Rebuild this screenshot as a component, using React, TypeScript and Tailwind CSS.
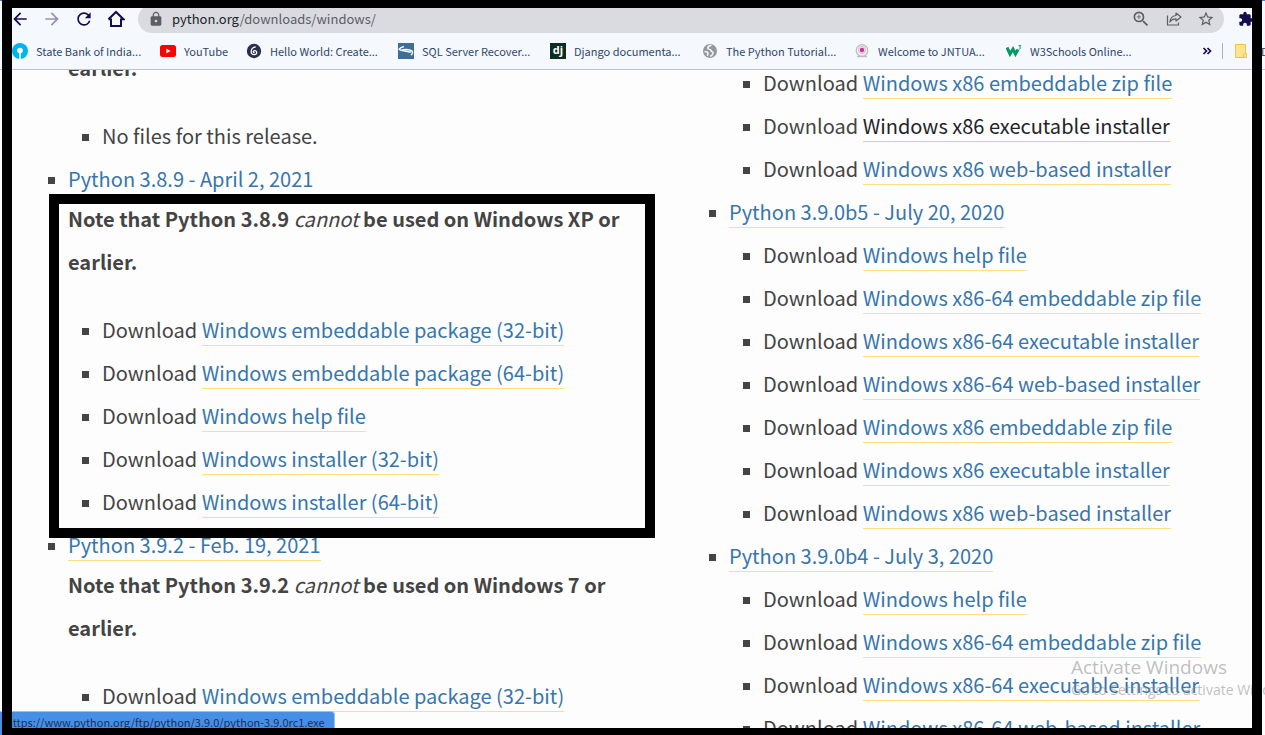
import React from "react";
import { MdArrowBack, MdArrowForward, MdRefresh, MdLock, MdZoomIn, MdStarBorder, MdExtension } from "react-icons/md";

const PAGE_FONT = "font-['Noto_Sans_CJK_SC','Noto_Sans',sans-serif]";

function HomeIcon() {
  return (
    <svg viewBox="0 0 18 18" className="size-[18px]" fill="none" stroke="currentColor" strokeWidth="2">
      <path d="M4 8.5V16h10V8.5M1.5 9.2 9 2l7.500 7.200H14M1.500 9.200H4" />
    </svg>
  );
}

function ShareIcon() {
  return (
    <svg viewBox="0 0 16 16" className="size-4" fill="none" stroke="currentColor" strokeWidth="1.200">
      <path d="M1.500 4.500v9.500h11v-2.500" />
      <path d="M10 2l5 4-5 4V7.800C7 7.800 5.200 8.800 3.800 11c.4-3.600 2.400-6 6.200-6.500z" strokeLinejoin="round" />
    </svg>
  );
}

function SbiIcon() {
  return (
    <svg viewBox="0 0 16 16" className="size-4">
      <circle cx="8" cy="8" r="8" fill="#00b5ef" />
      <circle cx="8" cy="7.500" r="2.800" fill="#fff" />
      <path d="M7.200 8h1.600v8H7.200z" fill="#fff" />
    </svg>
  );
}

function YouTubeIcon() {
  return (
    <svg viewBox="0 0 16 16" className="size-4">
      <rect x="0" y="2" width="16" height="12" rx="2.500" fill="#f00" />
      <path d="M6.300 5.500v5L10.600 8z" fill="#fff" />
    </svg>
  );
}

function HelloIcon() {
  return (
    <svg viewBox="0 0 16 16" className="size-4">
      <circle cx="8" cy="8" r="7.200" fill="#2b2f4d" />
      <path
        d="M9.800 3.800C7 4.200 5.200 6 5.200 8.500c0 2 1.200 3.200 2.900 3.200 1.600 0 2.600-.9 2.600-2.200 0-1.200-.9-1.900-2-1.900-.9 0-1.500.5-1.500 1.200s.5 1 1.400.9"
        fill="none"
        stroke="#fff"
        strokeWidth="1.200"
      />
    </svg>
  );
}

function SqlIcon() {
  return (
    <svg viewBox="0 0 16 16" className="size-4">
      <path fill="#3b6e98" d="M0 0h16v16H0z" />
      <path
        d="M6 3.500C3.500 4 2 4.800 1.200 6.200c.8 1.500 3 1.500 5.300 1.700 2.500.2 4 1.200 6.500 1.100M4 7c3-.6 6-.6 8.500.3 2.500 1 2.800 2.700.5 5"
        fill="none"
        stroke="#f3f7fa"
        strokeWidth="1.500"
      />
    </svg>
  );
}

function DjangoIcon() {
  return (
    <span className="flex size-4 items-center justify-center bg-[#0c2e20] pb-0.5 font-['Open_Sans',sans-serif] text-[11px] leading-none font-bold text-white">
      dj
    </span>
  );
}

function GlobeIcon() {
  return (
    <svg viewBox="0 0 16 16" className="size-4">
      <circle cx="8" cy="8" r="7" fill="#96989c" />
      <path
        d="M9.500 2.300C8 2.500 6 3.700 5.700 5c-.2 1.200 1.600 1.200 2.600 1.700 1 .5.500 1.500 1.700 1.900.9.300 1.300 1.100.8 2.100-.5 1.100-1.500 2.200-2.700 2.700M2.500 8.500c1.500 0 3.200.5 3.500 1.700.2.900-.6 1.500-.4 2.600"
        fill="none"
        stroke="#f5f9fe"
        strokeWidth="1.500"
      />
    </svg>
  );
}

function JntuaIcon() {
  return (
    <svg viewBox="0 0 16 16" className="size-4">
      <circle cx="8" cy="7.500" r="5.800" fill="#f3eef2" stroke="#bdbcc0" strokeWidth="1.200" />
      <circle cx="8" cy="7" r="3.500" fill="none" stroke="#d8b6cf" strokeWidth="1" />
      <circle cx="8" cy="7" r="2.200" fill="#cf2f91" />
      <path d="M3 13.500h10" stroke="#bdbcc0" strokeWidth="1.500" />
    </svg>
  );
}

function W3Icon() {
  return (
    <svg viewBox="0 0 16 16" className="size-4" fill="none" stroke="#059862">
      <path d="M1 4.500 4 11l3-5L9.500 11l2.500-4.500" strokeWidth="3" />
      <path d="M12.600 2.500h2.200l-1.200 1.600c1.300 0 1.500 2-.9 1.900" strokeWidth="0.900" />
    </svg>
  );
}

function FolderIcon() {
  return (
    <svg viewBox="0 0 12 16" className="h-4 w-3 shrink-0">
      <path d="M.5 1.500h10v9h1v4H.5z" fill="#ffe48e" stroke="#eec44a" />
      <path d="M8.500 14.500v-3l2-1" fill="none" stroke="#eec44a" />
    </svg>
  );
}

const bookmarks = [
  { label: "State Bank of India...", icon: <SbiIcon />, width: "w-[148px]" },
  { label: "YouTube", icon: <YouTubeIcon />, width: "w-[86px]" },
  { label: "Hello World: Create...", icon: <HelloIcon />, width: "w-[152px]" },
  { label: "SQL Server Recover...", icon: <SqlIcon />, width: "w-[152px]" },
  { label: "Django documenta...", icon: <DjangoIcon />, width: "w-[152px]" },
  { label: "The Python Tutorial...", icon: <GlobeIcon />, width: "w-[152px]" },
  { label: "Welcome to JNTUA...", icon: <JntuaIcon />, width: "w-[152px]" },
  { label: "W3Schools Online...", icon: <W3Icon />, width: "w-[152px]" },
];

function Toolbar() {
  return (
    <div className="flex h-[37px] items-center pb-0.5 pl-[10px] text-[#150b4d]">
      <button aria-label="Back" className="w-8"><MdArrowBack className="size-5" /></button>
      <button aria-label="Forward" className="w-8 text-[#958fb4]"><MdArrowForward className="size-5" /></button>
      <button aria-label="Reload" className="w-8"><MdRefresh className="size-5" /></button>
      <button aria-label="Home" className="w-8 pl-px"><HomeIcon /></button>
      <div className="flex h-7 flex-1 items-center gap-[15px] rounded-full bg-[#dadbe0] pr-[9px] pl-2.5 text-[#5c5e63]">
        <MdLock className="size-4 shrink-0" />
        <div className={`-ml-[7px] flex-1 text-[13px] leading-5 ${PAGE_FONT}`}>
          <span className="text-[#202124]">python.org</span>/downloads/windows/
        </div>
        <button aria-label="Zoom"><MdZoomIn className="size-5" /></button>
        <button aria-label="Share"><ShareIcon /></button>
        <button aria-label="Bookmark this page"><MdStarBorder className="size-[18px]" /></button>
      </div>
      <button aria-label="Extensions" className="w-[41px] pl-3.5"><MdExtension className="size-4" /></button>
    </div>
  );
}

function BookmarksBar() {
  return (
    <nav className={`flex h-8 items-center overflow-hidden border-b border-[#bdbfd2] pl-3 text-[11px] leading-4 whitespace-nowrap text-[#2f4668] ${PAGE_FONT}`}>
      {bookmarks.map((b) => (
        <a key={b.label} href="#" className={`flex shrink-0 items-center gap-2 pb-1.5 ${b.width}`}>
          {b.icon}
          {b.label}
        </a>
      ))}
      <div className="ml-auto flex shrink-0 items-center pb-1.5">
        <button aria-label="More bookmarks" className="mr-2.5 text-[#150b4d]">
          <svg viewBox="0 0 10 8" className="h-2 w-2.5" fill="none" stroke="currentColor" strokeWidth="1.700">
            <path d="M1.500 1l3 3-3 3M5.500 1l3 3-3 3" />
          </svg>
        </button>
        <span className="mr-3 h-4 w-px bg-[#a9b0c6]" />
        <a href="#" className="flex w-[30px] items-center gap-3.5">
          <FolderIcon />
          D
        </a>
      </div>
    </nav>
  );
}

function PageLink({ children, active = false }: { children: React.ReactNode; active?: boolean }) {
  return (
    <a
      href="#"
      className={
        active
          ? "border-b border-[#ffcf3a] pb-px text-[#1f2329]"
          : "border-b border-[#ffe07c] pb-px text-[#3776ab]"
      }
    >
      {children}
    </a>
  );
}

function Bullet() {
  return <span className="mt-5 size-[7px] shrink-0 bg-[#444]" />;
}

function Release({ title, note, children }: { title?: string; note?: React.ReactNode; children: React.ReactNode }) {
  return (
    <li>
      {title && (
        <div className="flex gap-[13px]">
          <Bullet />
          <span>
            <PageLink>{title}</PageLink>
          </span>
        </div>
      )}
      {note && <p className="-mt-[3px] mb-[25px] pl-5 font-bold">{note}</p>}
      <ul className="pl-[34px]">{children}</ul>
    </li>
  );
}

function File({ name, active }: { name: string; active?: boolean }) {
  return (
    <li className="flex gap-[13px]">
      <Bullet />
      <span>
        Download <PageLink active={active}>{name}</PageLink>
      </span>
    </li>
  );
}

function Note({ version, system }: { version: string; system: string }) {
  return (
    <>
      Note that Python {version} <em className="font-normal">cannot</em> be used on Windows {system} or
      <br />
      earlier.
    </>
  );
}

const pre = [
  "Windows help file",
  "Windows x86-64 embeddable zip file",
  "Windows x86-64 executable installer",
  "Windows x86-64 web-based installer",
  "Windows x86 embeddable zip file",
  "Windows x86 executable installer",
  "Windows x86 web-based installer",
];

const stable = [
  "Windows embeddable package (32-bit)",
  "Windows embeddable package (64-bit)",
  "Windows help file",
  "Windows installer (32-bit)",
  "Windows installer (64-bit)",
];

export default function App() {
  return (
    <div className="relative flex h-screen flex-col overflow-hidden bg-[#fdfdfd]">
      <header className="shrink-0 border-t border-[#3b82e0] bg-[#f5f9fe]">
        <Toolbar />
        <BookmarksBar />
      </header>

      <main
        className={`grid min-h-0 flex-1 grid-cols-[661fr_556fr] overflow-hidden pl-12 text-[20px] leading-[43px] whitespace-nowrap text-[#444] ${PAGE_FONT}`}
      >
        <ul className="-mt-6">
          <li>
            <p className="mb-[25px] pl-5 font-bold">earlier.</p>
            <ul className="pl-[34px]">
              <li className="flex gap-[13px]">
                <Bullet />
                No files for this release.
              </li>
            </ul>
          </li>
          <Release title="Python 3.8.9 - April 2, 2021" note={<Note version="3.8.9" system="XP" />}>
            {stable.map((f) => <File key={f} name={f} />)}
          </Release>
          <Release title="Python 3.9.2 - Feb. 19, 2021" note={<Note version="3.9.2" system="7" />}>
            {stable.slice(0, 1).map((f) => <File key={f} name={f} />)}
          </Release>
        </ul>
        <ul className="-mt-[9px]">
          <Release>
            {pre.slice(4).map((f, i) => <File key={f} name={f} active={i === 1} />)}
          </Release>
          <Release title="Python 3.9.0b5 - July 20, 2020">
            {pre.map((f) => <File key={f} name={f} />)}
          </Release>
          <Release title="Python 3.9.0b4 - July 3, 2020">
            {pre.slice(0, 4).map((f) => <File key={f} name={f} />)}
          </Release>
        </ul>
      </main>

      <div className="absolute top-[194px] left-[49px] h-[344px] w-[606px] border-10 border-black" />

      <div className={`absolute bottom-0 left-0 h-6 w-[335px] overflow-hidden rounded-tr border-t border-r border-[#9cc0ea] bg-[#468fe6] pt-0.5 pl-[6px] text-[11px] leading-4 whitespace-nowrap text-[#1d3057] ${PAGE_FONT}`}>
        https://www.python.org/ftp/python/3.9.0/python-3.9.0rc1.exe
      </div>

      <div className="absolute right-0 bottom-[34px] w-[194px] overflow-hidden font-['Open_Sans',sans-serif] whitespace-nowrap text-[#8a8a8a]/55">
        <p className="text-[19px] leading-6">Activate Windows</p>
        <p className="text-[14px] leading-[22px]">Go to Settings to activate Windows.</p>
      </div>

      <div className="pointer-events-none absolute inset-y-0 right-[3px] left-[2px] border-x-10 border-t-8 border-b-[7px] border-black" />
    </div>
  );
}
